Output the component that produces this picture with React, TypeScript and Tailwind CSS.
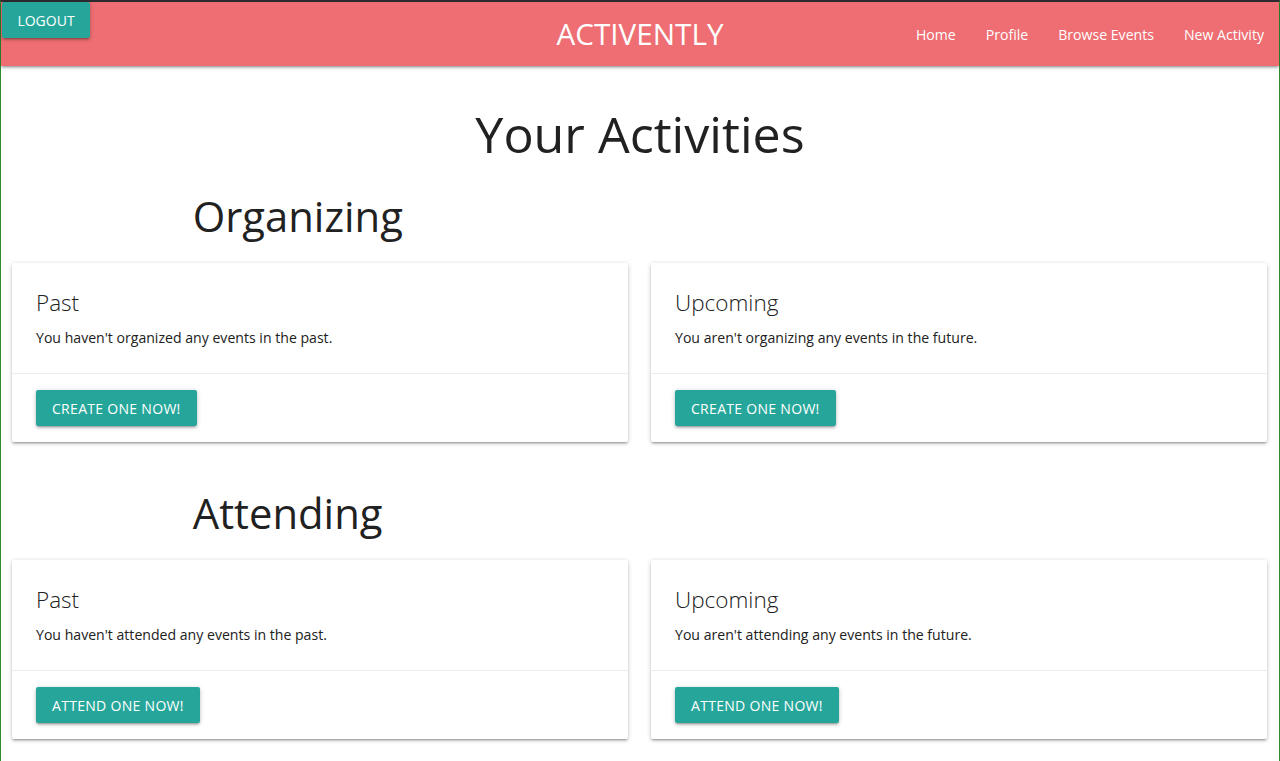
import React from 'react';

const font = { fontFamily: '"Segoe UI", "Open Sans", "Noto Sans", sans-serif' };

const navLinks = ['Home', 'Profile', 'Browse Events', 'New Activity'];

const z1 = 'shadow-[0_2px_2px_0_rgba(0,0,0,0.14),0_3px_1px_-2px_rgba(0,0,0,0.12),0_1px_5px_0_rgba(0,0,0,0.2)]';

type CardProps = { title: string; text: string; action: string };

function ActivityCard({ title, text, action }: CardProps) {
    return (
        <div className="bg-white rounded-[2px] shadow-[0_2px_2px_0_rgba(0,0,0,0.14),0_3px_1px_-2px_rgba(0,0,0,0.12),0_1px_5px_0_rgba(0,0,0,0.2)]">
            <div className="p-6">
                <p className="text-[22.5px] font-light leading-8 mb-2 text-[#212121]">{title}</p>
                <p className="text-[14.1px] leading-[22px] text-[#212121]">{text}</p>
            </div>
            <div className="border-t border-[rgba(160,160,160,0.2)] px-6 py-4">
                <button className="h-9 px-4 rounded-[2px] bg-[#26a69a] text-white text-[14px] uppercase tracking-[0.3px] shadow-[0_2px_2px_0_rgba(0,0,0,0.14),0_3px_1px_-2px_rgba(0,0,0,0.12),0_1px_5px_0_rgba(0,0,0,0.2)]">
                    {action}
                </button>
            </div>
        </div>
    );
}

function Section({ heading, verb, past, future }: { heading: string; verb: string; past: string; future: string }) {
    return (
        <section>
            <div className="w-[70%] mx-auto">
                <h3 className="text-[41.8px] leading-[48px] text-[#212121] pt-2">{heading}</h3>
            </div>
            <div className="grid grid-cols-[616px_616px] gap-[23px] pl-[11px] mt-[23px]">
                <ActivityCard title="Past" text={past} action={verb} />
                <ActivityCard title="Upcoming" text={future} action={verb} />
            </div>
        </section>
    );
}

export default function App() {
    return (
        <div style={font} className="min-h-[761px] bg-white border-t-2 border-t-[#2d2d33] border-x border-x-[#2e8b2e]">
            {/* Navbar */}
            <nav className={`relative h-16 bg-[#ee6e73] text-white ${z1}`}>
                <button className={`absolute left-px top-0 h-9 w-[88px] bg-[#26a69a] text-white text-[14px] uppercase rounded-[2px] ${z1}`}>
                    Logout
                </button>
                <div className="absolute inset-x-0 top-0 flex justify-center pointer-events-none">
                    <span className="text-[29.7px] leading-[64px]">ACTIVENTLY</span>
                </div>
                <ul className="flex justify-end h-16">
                    {navLinks.map((l) => (
                        <li key={l} className="px-[15px] text-[14.1px] leading-[66px]">
                            {l}
                        </li>
                    ))}
                </ul>
            </nav>

            <h2 className="text-center text-[50.2px] leading-[59px] text-[#212121] mt-[38px]">Your Activities</h2>

            <div className="mt-[21px]">
                <Section
                    heading="Organizing"
                    verb="Create one now!"
                    past="You haven't organized any events in the past."
                    future="You aren't organizing any events in the future."
                />
            </div>
            <div className="mt-[39px] pb-5">
                <Section
                    heading="Attending"
                    verb="Attend one now!"
                    past="You haven't attended any events in the past."
                    future="You aren't attending any events in the future."
                />
            </div>
        </div>
    );
}
